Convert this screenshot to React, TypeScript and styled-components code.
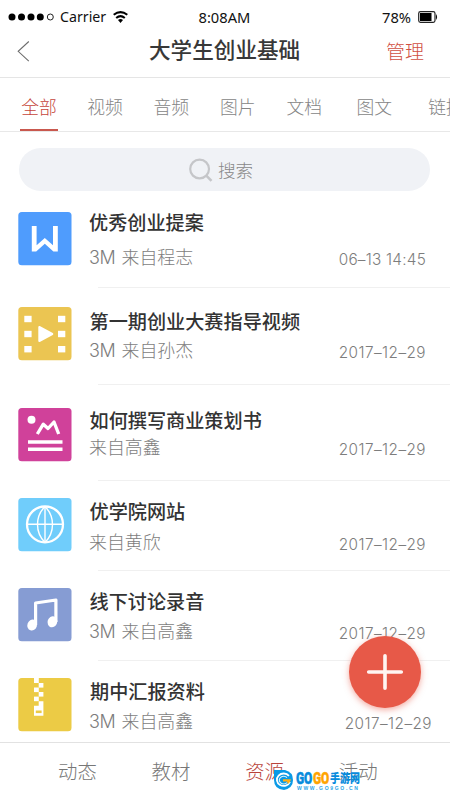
import React from 'react';
import styled, { createGlobalStyle } from 'styled-components';

const GlobalStyle = createGlobalStyle`
  * { box-sizing: border-box; }
  body { margin: 0; background: #fff; }
`;

const cjk = "'Noto Sans CJK SC', sans-serif";

const Screen = styled.div`
  position: relative;
  width: 450px;
  height: 800px;
  overflow: hidden;
  display: flex;
  flex-direction: column;
  background: #fff;
  font-family: ${cjk};
  white-space: nowrap;
`;

const StatusBar = styled.div`
  height: 32px;
  display: grid;
  grid-template-columns: 198.5px 183.5px 1fr;
  align-items: center;
  color: #111;
  font: 400 14.7px/20px 'Noto Sans', sans-serif;
  padding-top: 1px;
`;
const StatusGroup = styled.div`
  display: flex;
  align-items: center;
`;
const Carrier = styled.span`
  width: 46px;
  margin: 0 7px 0 6px;
  font-size: 14.2px;
`;
const Signal = styled.svg`
  margin-left: 8px;
`;
const Battery = styled.svg`
  margin-left: 7px;
`;

const Header = styled.header`
  height: 46px;
  display: grid;
  grid-template-columns: 149px 1fr 64px;
  border-bottom: 1px solid #e5e5e5;
`;
const Back = styled.button`
  border: 0;
  background: none;
  padding: 9px 0 0 17px;
  display: flex;
`;
const Title = styled.h1`
  margin: 0;
  padding-top: 3px;
  font: 500 21.6px/28px ${cjk};
  color: #383838;
`;
const Manage = styled.a`
  padding-top: 5px;
  font: 300 19px/28px ${cjk};
  color: #d04f42;
`;

const Tabs = styled.nav`
  height: 54px;
  display: flex;
  padding-left: 20px;
  border-bottom: 1px solid #e8e8e8;
`;
const Tab = styled.a<{ $active?: boolean; $gap: number }>`
  flex: 0 0 38px;
  height: 53px;
  margin-right: ${p => p.$gap}px;
  padding-top: 15px;
  text-align: center;
  font: 300 17.8px/26px ${cjk};
  color: ${p => (p.$active ? '#c5453b' : '#858585')};
  border-bottom: 2px solid ${p => (p.$active ? '#c9584e' : 'transparent')};
`;

const Search = styled.div`
  height: 43px;
  margin: 16px 20px 0 19px;
  border-radius: 22px;
  background: #f0f2f6;
  display: flex;
  align-items: center;
  padding-left: 170px;
  gap: 5px;
  font: 300 17.6px/26px ${cjk};
  color: #888;
`;

const List = styled.main`
  height: 551px;
`;
const Row = styled.article<{ $h: number }>`
  height: ${p => p.$h}px;
  display: grid;
  grid-template-columns: 71px 1fr auto;
  padding-left: 18px;
  &:not(:last-child) {
    background: linear-gradient(#f0f0f0, #f0f0f0) 98px 100% / 100% 1px no-repeat;
  }
`;
const Tile = styled.svg<{ $top: number }>`
  margin-top: ${p => p.$top}px;
  display: block;
`;
const Info = styled.div<{ $top: number; $gap: number }>`
  padding-top: ${p => p.$top}px;
  display: flex;
  flex-direction: column;
  gap: ${p => p.$gap}px;
`;
const Name = styled.h2<{ $indent: number }>`
  margin: 0 0 0 ${p => p.$indent}px;
  font: 500 19.15px/24px ${cjk};
  color: #333;
`;
const Source = styled.div`
  font: 300 17.9px/24px ${cjk};
  color: #7d7d7d;
`;
const Size = styled.span`
  display: inline-block;
  width: 32.5px;
  font: 300 18px/20px Inter, sans-serif;
  letter-spacing: -0.4px;
`;
const DateText = styled.time<{ $top: number; $right: number; $tight?: boolean }>`
  padding: ${p => p.$top}px ${p => p.$right}px 0 0;
  font: 300 15.3px/20px Inter, sans-serif;
  letter-spacing: ${p => (p.$tight ? 0.25 : 0.45)}px;
  color: #7d7d7d;
`;

const BottomNav = styled.nav`
  height: 58px;
  display: flex;
  gap: 54.6px;
  padding: 14px 0 0 58px;
  border-top: 1px solid #e2e2e2;
`;
const NavItem = styled.a<{ $active?: boolean }>`
  width: 39px;
  font: 300 19.4px/28px ${cjk};
  color: ${p => (p.$active ? '#b9433a' : '#777')};
`;

const Fab = styled.button`
  position: absolute;
  left: 349px;
  top: 636px;
  width: 72px;
  height: 72px;
  padding: 0;
  border: 0;
  border-radius: 50%;
  background: #e75948;
  box-shadow: 0 2px 6px rgba(231, 89, 72, 0.5);
`;

const Watermark = styled.div`
  position: absolute;
  left: 273px;
  top: 769px;
  display: flex;
  align-items: flex-start;
  gap: 2px;
`;
const MarkText = styled.div`
  display: flex;
  flex-direction: column;
`;
const MarkName = styled.div`
  display: flex;
  height: 17px;
  line-height: 19px;
`;
const MarkWord = styled.span<{ $color: string }>`
  width: 17px;
  color: ${p => p.$color};
  font-size: 17px;
  font-weight: 900;
  font-family: Roboto, sans-serif;
  -webkit-text-stroke: 0.5px ${p => p.$color};
  transform: scaleX(0.7);
  transform-origin: left center;
`;
const MarkChinese = styled.span`
  color: #078bdc;
  font: 900 10px/17px ${cjk};
  transform: scaleY(1.25);
`;
const MarkUrl = styled.div`
  font: 700 5px/5px 'Liberation Sans', sans-serif;
  letter-spacing: 1.7px;
  color: #2aa6e8;
  padding-left: 1px;
`;

type Kind = 'word' | 'video' | 'image' | 'web' | 'music' | 'zip';

const tileColor: Record<Kind, string> = {
  word: '#4f9cfd',
  video: '#ebc552',
  image: '#d0419a',
  web: '#70cdfb',
  music: '#869cd3',
  zip: '#eccb45',
};

const glyphs: Record<Kind, React.ReactNode> = {
  word: <path d="M13.8 14h4.8v19.2l8.2-7.2 8.2 7.2V14h4.8v25.6h-4.4l-8.6-7.8-8.6 7.8h-4.4z" fill="#fff" />,
  video: (
    <g fill="#fff">
      {[8.8, 23.8, 39].map(y => (
        <React.Fragment key={y}>
          <rect x="6.3" y={y} width="7.3" height="6.4" />
          <rect x="40" y={y} width="7.3" height="6.4" />
        </React.Fragment>
      ))}
      <path d="M21.3 20v14l13-7z" stroke="#fff" strokeWidth="2" strokeLinejoin="round" />
    </g>
  ),
  image: (
    <g fill="none" stroke="#fff">
      <circle cx="13.5" cy="11.7" r="4" fill="#fff" stroke="none" />
      <path d="M19.3 26L25.3 16.2l4.7 4.3 6-6.5L40.7 26" strokeWidth="3.3" strokeLinejoin="round" />
      <path d="M10 34h34.5M10 41.2h34.5" strokeWidth="3.5" />
    </g>
  ),
  web: (
    <g fill="none" stroke="#fff" strokeWidth="1.4">
      <circle cx="27" cy="26.3" r="18" strokeWidth="2.3" />
      <path d="M9 26.3h36M27 8.5v36" />
      <path d="M27 8.5c-10 10-10 26 0 36M27 8.5c10 10 10 26 0 36" />
    </g>
  ),
  music: (
    <g fill="#fff">
      <ellipse cx="14.2" cy="37" rx="4.8" ry="5.6" transform="rotate(18 14.2 37)" />
      <ellipse cx="34.4" cy="33.8" rx="4.8" ry="5.6" transform="rotate(18 34.4 33.8)" />
      <path d="M17.6 37V15L37.9 12V34" fill="none" stroke="#fff" strokeWidth="3.2" strokeLinejoin="round" />
    </g>
  ),
  zip: (
    <g fill="#fff">
      <rect x="16" width="4.8" height="5" />
      <rect x="20.7" y="5" width="4.7" height="4.6" />
      <rect x="16" y="9.5" width="4.8" height="4.6" />
      <rect x="20.7" y="14" width="4.7" height="4.6" />
      <rect x="16" y="18.6" width="4.8" height="4.6" />
      <path d="M20.7 23.2h4.7v14.5H16v-10h4.7z" />
      <rect x="17.8" y="32.5" width="5.8" height="2.6" fill={tileColor.zip} />
    </g>
  ),
};

interface Resource {
  kind: Kind;
  name: string;
  size?: string;
  from: string;
  date: string;
  h: number;
  icon: number;
  top: number;
  gap: number;
  dateTop: number;
  right: number;
  indent: number;
}

const resources: Resource[] = [
  { kind: 'word', name: '优秀创业提案', size: '3M', from: '来自程志', date: '06–13 14:45', h: 97, icon: 21, top: 19, gap: 9.5, dateTop: 59, right: 24, indent: 0 },
  { kind: 'video', name: '第一期创业大赛指导视频', size: '3M', from: '来自孙杰', date: '2017–12–29', h: 97, icon: 19, top: 21, gap: 4, dateTop: 54.5, right: 24, indent: 0.5 },
  { kind: 'image', name: '如何撰写商业策划书', from: '来自高鑫', date: '2017–12–29', h: 96, icon: 22.5, top: 23, gap: 1.5, dateTop: 54.5, right: 24, indent: 0.5 },
  { kind: 'web', name: '优学院网站', from: '来自黄欣', date: '2017–12–29', h: 90, icon: 17, top: 18, gap: 5.5, dateTop: 54, right: 24, indent: 0.5 },
  { kind: 'music', name: '线下讨论录音', size: '3M', from: '来自高鑫', date: '2017–12–29', h: 90, icon: 16.5, top: 18, gap: 5, dateTop: 53, right: 24, indent: 0.5 },
  { kind: 'zip', name: '期中汇报资料', size: '3M', from: '来自高鑫', date: '2017–12–29', h: 81, icon: 16.5, top: 18, gap: 4.5, dateTop: 53, right: 18, indent: 1 },
];

const tabs = [
  { label: '全部', gap: 28 },
  { label: '视频', gap: 28.3 },
  { label: '音频', gap: 28.4 },
  { label: '图片', gap: 28.6 },
  { label: '文档', gap: 32 },
  { label: '图文', gap: 33.7 },
  { label: '链接', gap: 0 },
];
const sections = ['动态', '教材', '资源', '活动'];

export default function App() {
  return (
    <Screen>
      <GlobalStyle />
      <StatusBar>
        <StatusGroup>
          <Signal width="46" height="10" viewBox="0 0 46 10">
            {[4, 13.5, 23, 32.3].map(x => <circle key={x} cx={x} cy="5" r="3.5" fill="#000" />)}
            <circle cx="42.3" cy="5" r="3" fill="none" stroke="#222" />
          </Signal>
          <Carrier>Carrier</Carrier>
          <svg width="15" height="12" viewBox="0 0 15 12" fill="none" stroke="#000" strokeWidth="2">
            <path d="M.7 3.8Q7.5-1.6 14.3 3.8M3.2 7Q7.5 3.3 11.8 7" />
            <path d="M5 9Q7.5 7 10 9L7.5 12z" fill="#000" stroke="none" />
          </svg>
        </StatusGroup>
        <span>8:08AM</span>
        <StatusGroup>
          <span>78%</span>
          <Battery width="20" height="12" viewBox="0 0 20 12">
            <rect x=".7" y=".7" width="16.3" height="10.6" rx="1.8" fill="#fff" stroke="#222" strokeWidth="1.2" />
            <rect x="2" y="2" width="11.5" height="8" fill="#000" />
            <path d="M18 3q2.2 3 0 6z" fill="#111" />
          </Battery>
        </StatusGroup>
      </StatusBar>
      <Header>
        <Back aria-label="返回">
          <svg width="13" height="21" viewBox="0 0 13 21" fill="none" stroke="#6d6d6d" strokeWidth="1.1">
            <path d="M11.8.5L1.2 10.3l10.6 9.9" />
          </svg>
        </Back>
        <Title>大学生创业基础</Title>
        <Manage>管理</Manage>
      </Header>
      <Tabs>
        {tabs.map((t, i) => <Tab key={t.label} $active={i === 0} $gap={t.gap}>{t.label}</Tab>)}
      </Tabs>
      <Search>
        <svg width="24" height="24" viewBox="0 0 24 24" fill="none" stroke="#c5c6c9" strokeWidth="2.2">
          <circle cx="10.6" cy="11" r="9.4" />
          <path d="M17.3 17.7l5.2 5.2" strokeWidth="2.6" />
        </svg>
        搜索
      </Search>
      <List>
        {resources.map(r => (
          <Row key={r.name} $h={r.h}>
            <Tile $top={r.icon} width="54" height="54" viewBox="0 0 54 54">
              <rect x=".3" width="53.2" height="53.2" rx="3.5" fill={tileColor[r.kind]} />
              {glyphs[r.kind]}
            </Tile>
            <Info $top={r.top} $gap={r.gap}>
              <Name $indent={r.indent}>{r.name}</Name>
              <Source>{r.size && <Size>{r.size}</Size>}{r.from}</Source>
            </Info>
            <DateText $top={r.dateTop} $right={r.right} $tight={r.date.includes(':')}>{r.date}</DateText>
          </Row>
        ))}
      </List>
      <BottomNav>
        {sections.map(s => <NavItem key={s} $active={s === '资源'}>{s}</NavItem>)}
      </BottomNav>
      <Fab aria-label="添加">
        <svg width="72" height="72" viewBox="0 0 72 72" stroke="#fff5f2" strokeWidth="3.6" strokeLinecap="round">
          <path d="M36 19.7v32.6M19.7 36h32.6" />
        </svg>
      </Fab>
      <Watermark>
        <svg width="21" height="22" viewBox="0 0 21 22">
          <path d="M1 1h11q8 2 8 10t-9 10Q1 20 1 11z" fill="#0a9ae6" />
          <path d="M16 6.8A6.8 6.2 0 1 0 17 13" fill="none" stroke="#fff" strokeWidth="1.8" />
          <path d="M14 8.6a4.4 3.8 0 1 0 0 5" fill="none" stroke="#d9f3ff" strokeWidth="1.2" />
          <path d="M10 10.3h8q-.5 3-3 4.7l-1.2-2.4H10z" fill="#ffae16" />
        </svg>
        <MarkText>
          <MarkName>
            <MarkWord $color="#078bdc">GO</MarkWord>
            <MarkWord $color="#ffa400">GO</MarkWord>
            <MarkChinese>手游网</MarkChinese>
          </MarkName>
          <MarkUrl>WWW.GO9GO.CN</MarkUrl>
        </MarkText>
      </Watermark>
    </Screen>
  );
}
